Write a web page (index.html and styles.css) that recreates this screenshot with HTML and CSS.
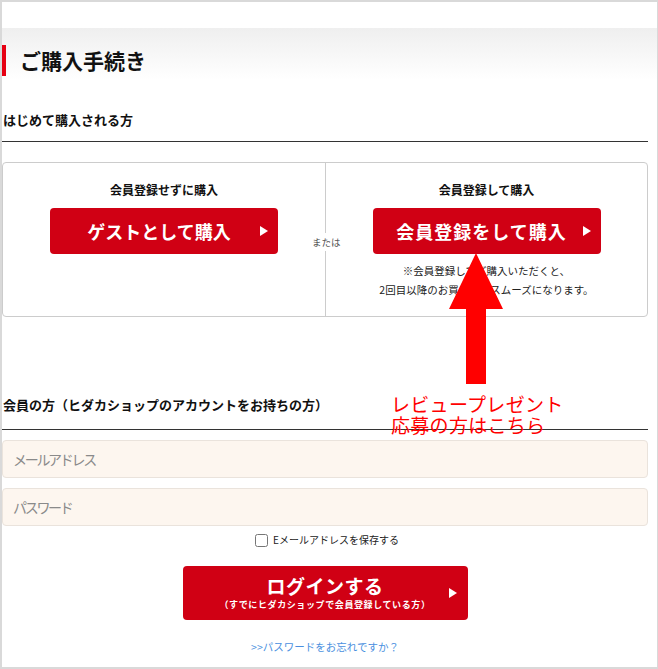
FILE: index.html
```html
<!DOCTYPE html>
<html lang="ja">
<head>
  <meta charset="UTF-8" />
  <meta name="viewport" content="width=device-width, initial-scale=1.0"/>
  <title>ご購入手続き</title>
  <link rel="stylesheet" href="styles.css">
</head>
<body>

  <div class="page">

    <!-- 見出し -->
    <div class="page-head">
      <h1 class="page-title">ご購入手続き</h1>
    </div>

    <div class="content">

      <!-- はじめて購入される方 -->
      <div class="sec-head">
        <h2 class="sec-title">はじめて購入される方</h2>
      </div>
      <div class="choice-box">
        <div class="choice">
          <p class="choice-label">会員登録せずに購入</p>
          <a class="btn-red btn-guest" href="#">ゲストとして購入</a>
        </div>
        <span class="or">または</span>
        <div class="choice choice-right">
          <p class="choice-label">会員登録して購入</p>
          <a class="btn-red btn-entry" href="#">会員登録をして購入</a>
          <p class="choice-note">※会員登録してご購入いただくと、<br>2回目以降のお買い物がスムーズになります。</p>
        </div>
      </div>

      <!-- 会員の方 -->
      <div class="sec-head sec-member">
        <h2 class="sec-title">会員の方（ヒダカショップのアカウントをお持ちの方）</h2>
      </div>
      <form class="login-form" action="#" method="post">
        <input class="field" type="text" name="email" placeholder="メールアドレス" />
        <input class="field" type="password" name="password" placeholder="パスワード" />
        <label class="save-row"><input type="checkbox" name="save" />Eメールアドレスを保存する</label>
        <button class="btn-red btn-login" type="submit">
          <span class="login-main">ログインする</span>
          <span class="login-sub">（すでにヒダカショップで会員登録している方）</span>
        </button>
        <a class="forgot" href="#">&gt;&gt;パスワードをお忘れですか？</a>
      </form>

    </div>

    <!-- 注記（矢印） -->
    <div class="note-arrow">
      <svg width="60" height="135" viewBox="0 0 60 135">
        <polygon points="27,0 54,56 37,56 37,131 17,131 17,56 0,56" fill="#ff0000"/>
      </svg>
    </div>
    <p class="note-text">レビュープレゼント<br>応募の方はこちら</p>

  </div>

</body>
</html>
```

FILE: styles.css
```css
body {
  margin: 0;
  font-family: "Noto Sans CJK JP", "Liberation Sans", sans-serif;
  background-color: #fff;
  color: #111;
}

.page {
  position: relative;
  box-sizing: border-box;
  width: 658px;
  height: 669px;
  border: 2px solid #d9d9d9;
  border-right-width: 1px;
  overflow: hidden;
}

/* 見出し */
.page-head {
  margin-top: 26px;
  height: 52px;
  background: linear-gradient(#efefef, #fff);
  overflow: hidden;
}
.page-title {
  margin: 17px 0 0;
  height: 31px;
  line-height: 31px;
  border-left: 4px solid #e60012;
  padding-left: 14px;
  font-size: 21px;
  font-weight: 700;
  color: #111;
}

.content {
  margin-right: 9px;
}

.sec-head {
  display: flex;
  margin-top: 30px;
  padding: 0 0 11px 1px;
  border-bottom: 1px solid #333;
}
.sec-title {
  margin: 0;
  line-height: 20px;
  font-size: 13px;
  font-weight: 700;
}
.sec-member {
  margin-top: 78px;
  padding-bottom: 14px;
}

/* 選択ボックス */
.choice-box {
  position: relative;
  display: grid;
  grid-template-columns: 322px 1fr;
  height: 155px;
  box-sizing: border-box;
  margin-top: 20px;
  border: 1px solid #ccc;
  border-radius: 4px;
}
.choice {
  display: flex;
  flex-direction: column;
  align-items: center;
  padding-top: 18px;
}
.choice-right {
  border-left: 1px solid #ccc;
}
.choice-label {
  margin: 0 0 9px;
  line-height: 18px;
  font-size: 12px;
  font-weight: 700;
}
.choice-note {
  margin: 7px 0 0;
  line-height: 19px;
  font-size: 10.5px;
  text-align: center;
  color: #222;
}
.or {
  position: absolute;
  left: 308px;
  top: 70px;
  padding: 2px 1px;
  background: #fff;
  font-size: 9.5px;
  color: #555;
  line-height: 14px;
}

/* 赤ボタン */
.btn-red {
  position: relative;
  display: flex;
  align-items: center;
  justify-content: center;
  box-sizing: border-box;
  width: 228px;
  height: 46px;
  padding-right: 10px;
  background-color: #d00014;
  border: none;
  border-radius: 4px;
  color: #fff;
  font-family: inherit;
  font-size: 18px;
  font-weight: 700;
  text-decoration: none;
}
.btn-red::after {
  content: "";
  position: absolute;
  right: 10px;
  top: 50%;
  margin-top: -5px;
  border-style: solid;
  border-width: 5px 0 5px 8px;
  border-color: transparent transparent transparent #fff;
}
.btn-entry {
  letter-spacing: 1px;
}

/* ログイン */
.login-form {
  display: flex;
  flex-direction: column;
  align-items: center;
}
.field {
  align-self: stretch;
  box-sizing: border-box;
  height: 38px;
  margin: 10px 0 0;
  padding: 0 10px;
  background-color: #fdf6ef;
  border: 1px solid #eae3dc;
  border-radius: 4px;
  font-family: inherit;
  font-size: 14px;
  outline: none;
}
.field::placeholder {
  color: #8a8a8a;
  letter-spacing: -2.3px;
}
.save-row {
  display: flex;
  align-items: center;
  margin-top: 6px;
  padding-left: 4px;
  line-height: 16px;
  font-size: 10px;
  color: #222;
}
.save-row input {
  width: 13px;
  height: 13px;
  margin: 0 5px 0 0;
}
.btn-login {
  flex-direction: column;
  width: 285px;
  height: 54px;
  margin-top: 18px;
  padding: 0;
  cursor: pointer;
}
.btn-login::after {
  right: 11px;
}
.login-main {
  font-size: 19px;
  line-height: 24px;
  letter-spacing: 0.5px;
}
.login-sub {
  font-size: 9px;
  line-height: 14px;
  letter-spacing: 0.6px;
}
.forgot {
  margin-top: 19px;
  line-height: 16px;
  font-size: 10.5px;
  color: #4a8fe0;
  text-decoration: none;
}

/* 注記 */
.note-arrow {
  position: absolute;
  left: 447px;
  top: 251px;
}
.note-arrow svg {
  display: block;
}
.note-text {
  position: absolute;
  left: 389px;
  top: 391px;
  margin: 0;
  line-height: 21px;
  font-size: 19px;
  letter-spacing: 0.3px;
  color: #ff0000;
}
```
